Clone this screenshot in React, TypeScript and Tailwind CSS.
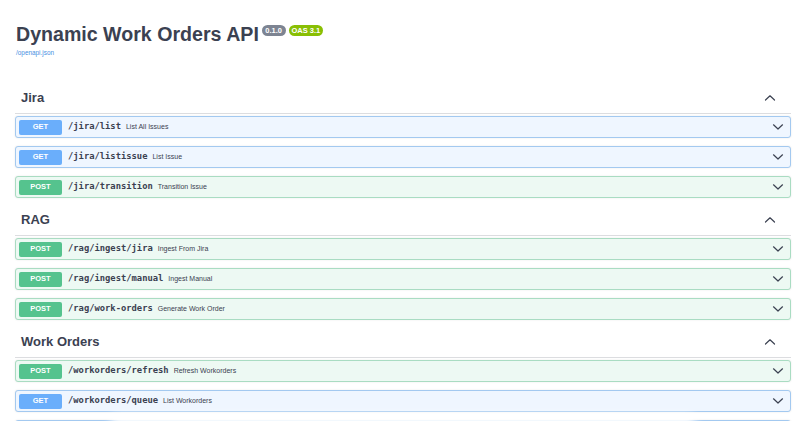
import React from "react";

type Op = { method: "GET" | "POST"; path: string; desc: string };

const sections: { name: string; ops: Op[]; partial?: boolean }[] = [
  {
    name: "Jira",
    ops: [
      { method: "GET", path: "/jira/list", desc: "List All Issues" },
      { method: "GET", path: "/jira/listissue", desc: "List Issue" },
      { method: "POST", path: "/jira/transition", desc: "Transition Issue" },
    ],
  },
  {
    name: "RAG",
    ops: [
      { method: "POST", path: "/rag/ingest/jira", desc: "Ingest From Jira" },
      { method: "POST", path: "/rag/ingest/manual", desc: "Ingest Manual" },
      { method: "POST", path: "/rag/work-orders", desc: "Generate Work Order" },
    ],
  },
  {
    name: "Work Orders",
    ops: [
      { method: "POST", path: "/workorders/refresh", desc: "Refresh Workorders" },
      { method: "GET", path: "/workorders/queue", desc: "List Workorders" },
    ],
    partial: true,
  },
];

const sans = { fontFamily: '"Liberation Sans", Arial, sans-serif' };
const mono = { fontFamily: '"DejaVu Sans Mono", "Liberation Mono", monospace' };

function ChevronDown() {
  return (
    <svg width="12" height="8" viewBox="0 0 12 8" className="ml-auto shrink-0">
      <path d="M1.5 1.8 L6 6 L10.5 1.8" fill="none" stroke="#3b4151" strokeWidth="1.2" strokeLinecap="round" strokeLinejoin="round" />
    </svg>
  );
}

function ChevronUp() {
  return (
    <svg width="12" height="8" viewBox="0 0 12 8" className="shrink-0">
      <path d="M1.5 6 L6 1.8 L10.5 6" fill="none" stroke="#3b4151" strokeWidth="1.2" strokeLinecap="round" strokeLinejoin="round" />
    </svg>
  );
}

function Row({ op }: { op: Op }) {
  const isGet = op.method === "GET";
  return (
    <div
      className={
        isGet
          ? "flex h-[22px] items-center rounded-[3px] border border-[#a3c9f0] bg-[#eff6ff] pl-[3px] pr-[6px] shadow-[0_0_2px_rgba(0,0,0,0.1)]"
          : "flex h-[22px] items-center rounded-[3px] border border-[#a9dcc2] bg-[#edf9f3] pl-[3px] pr-[6px] shadow-[0_0_2px_rgba(0,0,0,0.1)]"
      }
    >
      <span
        className={
          isGet
            ? "flex h-[15px] w-[43px] shrink-0 items-center justify-center rounded-[2px] bg-[#6aaefb] text-[7.5px] font-bold text-white"
            : "flex h-[15px] w-[43px] shrink-0 items-center justify-center rounded-[2px] bg-[#55c38e] text-[7.5px] font-bold text-white"
        }
        style={sans}
      >
        {op.method}
      </span>
      <span className="ml-[6px] text-[8.8px] font-bold text-[#3b4151]" style={mono}>
        {op.path}
      </span>
      <span className="ml-[5px] text-[7px] text-[#3b4151]" style={sans}>
        {op.desc}
      </span>
      <ChevronDown />
    </div>
  );
}

export default function App() {
  return (
    <div className="relative h-[421px] w-[806px] overflow-hidden bg-white text-[#3b4151]" style={sans}>
      <div className="px-[15px]">
        <div className="pl-[1px] pt-[22px]">
          <div className="flex items-start">
            <h1 className="text-[19.6px] font-bold leading-[24px] text-[#3b4151]">Dynamic Work Orders API</h1>
            <span className="ml-[3px] mt-[3px] rounded-[6px] bg-[#7d8492] px-[3.5px] text-[7.5px] font-bold leading-[11px] text-white">
              0.1.0
            </span>
            <span className="ml-[3px] mt-[3px] rounded-[6px] bg-[#89bf04] px-[3px] text-[7.5px] font-bold leading-[11px] text-white">
              OAS 3.1
            </span>
          </div>
          <div className="mt-[2px] text-[6.4px] leading-[10px] text-[#4990e2]">/openapi.json</div>
        </div>

        <div className="mt-[30px] flex flex-col gap-[12px]">
          {sections.map((s) => (
            <div key={s.name}>
              <div className="flex h-[26px] items-start justify-between border-b border-[#dcdde0] pl-[6px] pr-[15px]">
                <span className="text-[13px] font-bold leading-[20px] text-[#3b4151]">{s.name}</span>
                <span className="mt-[6px]">
                  <ChevronUp />
                </span>
              </div>
              <div className="mt-[2px] flex flex-col gap-[8px]">
                {s.ops.map((op) => (
                  <Row key={op.path} op={op} />
                ))}
                {s.partial && (
                  <div className="h-[22px] rounded-[3px] border border-[#a3c9f0] bg-[#eff6ff] shadow-[0_0_2px_rgba(0,0,0,0.1)]" />
                )}
              </div>
            </div>
          ))}
        </div>
      </div>
      <div className="pointer-events-none absolute bottom-[-8px] left-[110px] right-[110px] h-[14px] rounded-full bg-white blur-[5px]" />
    </div>
  );
}
